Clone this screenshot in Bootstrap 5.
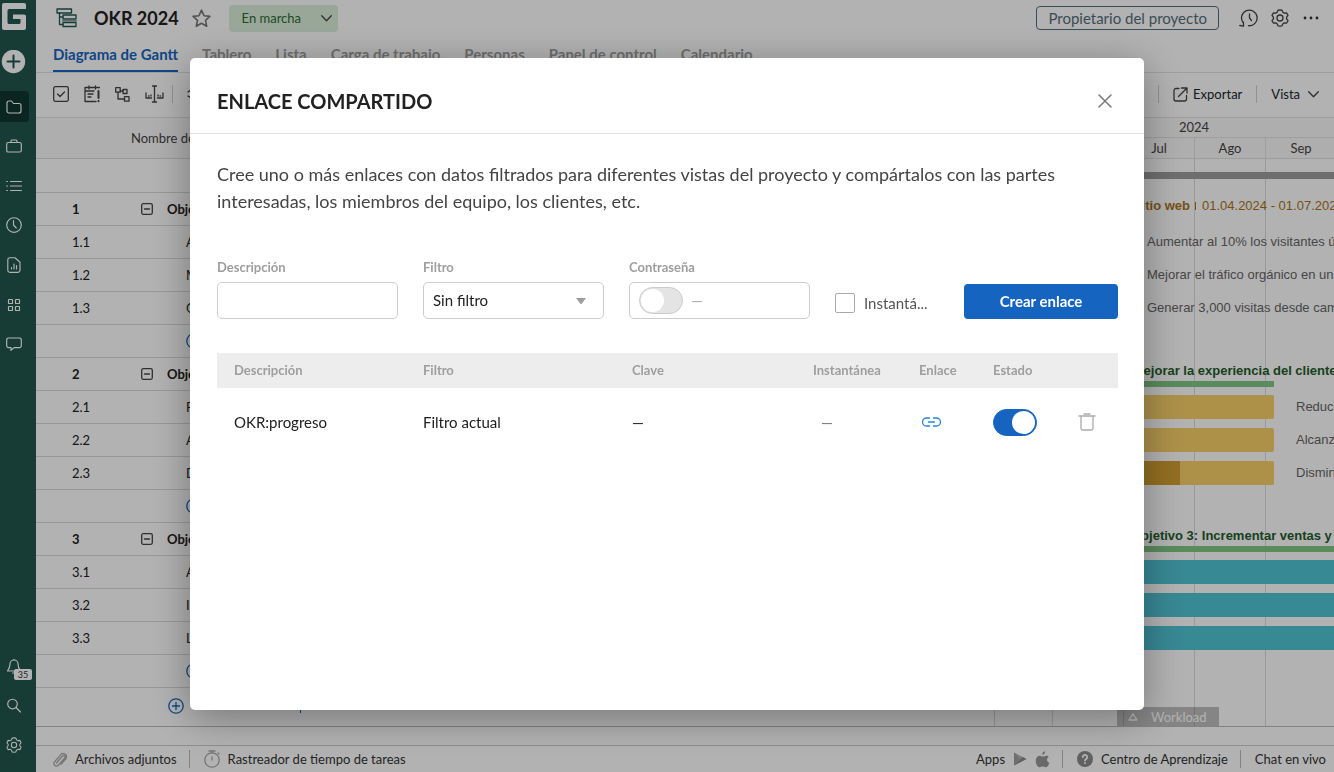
<!DOCTYPE html>
<html lang="es">
<head>
<meta charset="utf-8">
<meta name="viewport" content="width=device-width, initial-scale=1">
<title>OKR 2024</title>
<link href="https://cdn.jsdelivr.net/npm/bootstrap@5.3.0/dist/css/bootstrap.min.css" rel="stylesheet">
<style>
  :root { --brand: #1565c0; --line: #e2e2e2; --ink: #212121; }
  body { font-family: Lato, "Liberation Sans", sans-serif; font-size: 13px; line-height: 20px; color: var(--ink); overflow: hidden; }
  svg { display: block; flex: none; fill: none; stroke: currentColor; stroke-width: 1.3; stroke-linecap: round; stroke-linejoin: round; }
  .plain { border: 0; background: none; padding: 0; color: inherit; display: flex; align-items: center; }
  a { color: inherit; text-decoration: none; }
  .ic-dark { color: #444; }
  .ic-mid { color: #777; }
  .ic-soft { color: #aaa; }
  .ic-link { color: #2a82d0; }
  .ic-green { color: #22574d; }

  /* side rail */
  .rail { flex: 0 0 36px; background: #22574d; color: #fff; }
  .rail svg { stroke-width: 1.15; }
  .rail-logo { padding: 3px 0 0 2px; }
  .rail-main { height: 269px; margin-top: 17px; }
  .rail .rail-btn { width: 29px; height: 31px; padding-left: 6px; border-radius: 0 4px 4px 0; }
  .rail .rail-btn.on { background: #113630; }
  .bell-count { position: absolute; left: 14px; top: 18px; width: 18px; border-radius: 2px; background: #fff; color: #333; font-size: 9px; line-height: 11px; text-align: center; }

  /* project header */
  .top-row { height: 36px; padding: 0 15px 0 20px; }
  .top-row h1 { font-size: 18px; line-height: 24px; font-weight: 700; margin: 0 13px 0 17px; }
  .status-btn { height: 27px; width: 109px; padding: 0 6px 0 13px; margin-left: 18px; border: 0; border-radius: 4px; background: #dcefdc; color: #2e6b33; }
  .owner { border: 1px solid #546e7a; border-radius: 4px; color: #546e7a; font-size: 15px; line-height: 22px; padding: 0 11px; }
  .view-tabs { height: 37px; padding-left: 17px; gap: 24px; border-bottom: 1px solid var(--line); font-size: 15px; font-weight: 700; color: #9e9e9e; }
  .view-tabs a { line-height: 36px; border-bottom: 2px solid transparent; height: 36px; white-space: nowrap; }
  .view-tabs a.on { color: var(--brand); border-color: var(--brand); }
  .tools { height: 45px; padding: 0 15px 2px 17px; border-bottom: 1px solid var(--line); color: #333; gap: 14px; }
  .tool-set { gap: 15px; margin-right: -6px; color: #444; }
  .vr-line { width: 1px; height: 18px; background: #d0d0d0; }

  /* task grid */
  .task-pane { flex: 0 0 959px; border-right: 1px solid #d5d5d5; }
  .task-table { width: 100%; table-layout: fixed; border-collapse: separate; border-spacing: 0; }
  .task-table th, .task-table td { height: 33px; padding: 0; border-bottom: 1px solid #dadada; white-space: nowrap; font-weight: 400; }
  .task-table thead th { height: 41px; background: #fafafa; padding-left: 95px; color: #444; }
  .task-table tr.first td { height: 34px; }
  .task-table td:first-child { padding-left: 36px; }
  .task-table tr.goal td { font-weight: 700; }
  .task-table td.sub { padding-left: 45px; }
  .task-table tr.last td { height: 36px; border-bottom: 0; }
  .fold { margin-right: 14px; }
  .add { color: var(--brand); }
  .add-first { padding-left: 27px; gap: 116px; }
  .add-split { width: 1px; height: 14px; background: var(--brand); }

  /* timeline */
  .time-pane { min-width: 0; font-family: "Liberation Sans", sans-serif; }
  .time-head { font-family: Lato, sans-serif; background: #fafafa; color: #444; }
  .year-row { height: 20px; padding-left: 184px; border-bottom: 1px solid var(--line); line-height: 18px; }
  .month-row { display: grid; grid-template-columns: 58px repeat(4, 71px); height: 21px; border-bottom: 1px solid var(--line); text-align: center; }
  .month-row span { border-right: 1px solid var(--line); }
  .time-body { background: repeating-linear-gradient(90deg, transparent 0 57px, #dcdcdc 57px 58px, transparent 58px 71px); }
  .t-row { height: 33px; white-space: nowrap; overflow: hidden; display: flex; align-items: center; color: #666; }
  .t-row.goal { display: block; padding-top: 4px; font-weight: 700; color: #235c2b; }
  .t-row.late { color: #a8741a; }
  .t-end { flex: none; display: flex; justify-content: flex-end; }
  .t-dates { font-weight: 400; padding-left: 5px; gap: 6px; }
  .t-dates::before { content: ""; width: 1px; height: 8px; background: currentColor; }
  .goal-bar { height: 6px; background: #81c784; }
  .t-bar { flex: none; height: 24px; border-radius: 2px; background: #f8d069; margin-right: 22px; overflow: hidden; }
  .t-bar.teal { background: #50c4d5; }
  .t-done { height: 100%; background: #d29f30; }
  .project-bar { height: 7px; width: 100%; background: #9e9e9e; }
  .load-tab { position: absolute; right: 115px; bottom: 0; width: 102px; height: 19px; padding-left: 11px; background: rgba(0,0,0,.25); color: #fff; gap: 13px; }
  .strip { height: 19px; border-top: 1px solid #bbb; }
  .foot { height: 27px; border-top: 1px solid #ccc; padding: 0 8px 0 17px; color: #333; white-space: nowrap; }
  .foot .vr-line { margin: 0 14px 0 12px; background: #bbb; }

  /* shared link dialog */
  .modal-backdrop.show { opacity: .3; }
  .modal-dialog { max-width: 954px; margin: 58px auto 0; }
  .modal-content { min-height: calc(100vh - 120px); border: 0; border-radius: 5px; box-shadow: 0 8px 40px rgba(0,0,0,.35); }
  .modal-header { height: 76px; padding: 10px 32px 0 27px; border-color: #ddd; }
  .modal-title { font-size: 20px; line-height: 28px; font-weight: 700; }
  .modal-body { padding: 27px 26px 27px 27px; }
  .modal-body p { font-size: 18px; line-height: 27px; color: #444; margin-bottom: 42px; }
  .new-link { display: grid; grid-template-columns: repeat(3, minmax(0, 1fr)) 104px 154px; gap: 25px; align-items: end; margin-bottom: 34px; }
  .new-link .form-label { font-size: 13px; line-height: 20px; font-weight: 700; color: #9e9e9e; margin-bottom: 5px; display: block; }
  .new-link .form-control, .new-link .form-select { height: 37px; border-color: #ccc; border-radius: 5px; padding: 0 9px; font-size: 15px; color: var(--ink); }
  .new-link .form-select { background: #fff url("data:image/svg+xml,%3Csvg xmlns='http://www.w3.org/2000/svg' viewBox='0 0 10 6'%3E%3Cpath d='M0 0h10L5.500 6h-1z' fill='%239e9e9e'/%3E%3C/svg%3E") no-repeat right 17px center / 10px 6px; }
  .snap { height: 32px; font-size: 15px; color: #555; white-space: nowrap; gap: 9px; }
  .snap .form-check-input { width: 20px; height: 20px; margin: 0; border-color: #aaa; border-radius: 2px; flex: none; }
  .create { height: 35px; background: var(--brand); border: 0; border-radius: 4px; font-size: 15px; font-weight: 700; padding: 0; color: #fff; }
  .toggle { appearance: none; flex: none; display: flex; margin: 0; width: 44px; height: 27px; padding: 1px; border: 1px solid #ccc; border-radius: 14px; background: #e4e4e4; }
  .toggle::before { content: ""; width: 23px; height: 23px; border-radius: 50%; background: #fff; }
  .toggle:checked { background: var(--brand); border-color: var(--brand); justify-content: flex-end; }
  .links { width: 100%; table-layout: fixed; }
  .links th { height: 35px; background: #ededed; color: #9e9e9e; font-size: 13px; font-weight: 700; padding: 0 0 2px 17px; }
  .links td { height: 68px; font-size: 15px; padding: 0 0 0 17px; }
</style>
</head>
<body>
<div class="d-flex vh-100">
  <nav class="rail d-flex flex-column" aria-label="Principal">
    <a href="#" aria-label="Inicio" class="rail-logo d-block"><svg width="24" height="27" viewBox="0 0 24 27"><path stroke="none" fill="#fff" d="M2 0h20a2 2 0 0 1 2 2v4H7a1.500 1.500 0 0 0-1.500 1.500v12A1.500 1.500 0 0 0 7 21h10a1.500 1.500 0 0 0 1.500-1.500V16H11v-4.500h11a2 2 0 0 1 2 2V25a2 2 0 0 1-2 2H2a2 2 0 0 1-2-2V2a2 2 0 0 1 2-2z"/></svg></a>
    <button class="plain mt-3 pt-1" aria-label="Crear"><svg width="27" height="24" viewBox="0 0 27 24"><circle cx="13.500" cy="11.500" r="11.700" fill="#fff" stroke="none"/><path d="M7.500 11.500h12M13.500 5.500v12" stroke="#22574d" stroke-width="2"/></svg></button>
    <div class="rail-main d-flex flex-column justify-content-between">
      <button class="plain rail-btn on" aria-label="Proyectos"><svg width="16" height="16" viewBox="0 0 16 16"><path d="M1 4a2 2 0 0 1 2-2h2.500l2 2.500H13a2 2 0 0 1 2 2V12a2 2 0 0 1-2 2H3a2 2 0 0 1-2-2z"/></svg></button>
      <button class="plain rail-btn" aria-label="Portafolio"><svg width="16" height="16" viewBox="0 0 16 16"><rect x=".7" y="4.500" width="14.600" height="9.500" rx="1.500"/><path d="M5 4.500V3a1 1 0 0 1 1-1h4a1 1 0 0 1 1 1v1.500"/></svg></button>
      <button class="plain rail-btn" aria-label="Mis tareas"><svg width="16" height="16" viewBox="0 0 16 16"><path d="M4.500 3.500h11M4.500 8h11M4.500 12.500h11M.7 3.500h.8M.7 8h.8M.7 12.500h.8"/></svg></button>
      <button class="plain rail-btn" aria-label="Tiempo"><svg width="16" height="16" viewBox="0 0 16 16"><circle cx="8" cy="8" r="7.300"/><path d="M7.500 3.500V8l2.800 3"/></svg></button>
      <button class="plain rail-btn" aria-label="Informes"><svg width="16" height="16" viewBox="0 0 16 16"><path d="M3.500.7h5.500l5 4.500V13a2.300 2.300 0 0 1-2.300 2.300H3.500A2 2 0 0 1 1.800 13.300V2.700a2 2 0 0 1 1.700-2zM5.500 12v-1.500M8 12V7M10.500 12V8.500"/></svg></button>
      <button class="plain rail-btn" aria-label="Paneles"><svg width="16" height="16" viewBox="0 0 16 16"><rect x="2.500" y="2.500" width="4" height="4" rx=".6"/><rect x="9.500" y="2.500" width="4" height="4" rx=".6"/><rect x="2.500" y="9.500" width="4" height="4" rx=".6"/><rect x="9.500" y="9.500" width="4" height="4" rx=".6"/></svg></button>
      <button class="plain rail-btn" aria-label="Comentarios"><svg width="16" height="16" viewBox="0 0 16 16"><path d="M2.500 2h11a1.800 1.800 0 0 1 1.800 1.800v6a1.800 1.800 0 0 1-1.800 1.800H8l-3 2.700v-2.700H2.500A1.800 1.800 0 0 1 .7 9.800v-6A1.800 1.800 0 0 1 2.500 2z"/></svg></button>
    </div>
    <div class="mt-auto d-flex flex-column gap-2 pb-2 mb-1">
      <button class="plain rail-btn position-relative" aria-label="Avisos"><svg width="16" height="16" viewBox="0 0 16 16"><path d="M8 0v1M8 1a4 4 0 0 1 4 4c0 3.500 1 5 2.500 7h-13C3 10 4 8.500 4 5a4 4 0 0 1 4-4zM6.500 14h3"/></svg><span class="bell-count">35</span></button>
      <button class="plain rail-btn" aria-label="Buscar"><svg width="16" height="16" viewBox="0 0 16 16"><circle cx="6.500" cy="6" r="4.800"/><path d="M10 9.500l4.500 4.500"/></svg></button>
      <button class="plain rail-btn" aria-label="Ajustes"><svg width="16" height="16" viewBox="0 0 18 18"><path d="M9 .9l2 .3.900 2.100 1.300.8 2.300-.3 1.500 2.600-1.400 1.800v1.600l1.400 1.800-1.500 2.600-2.300-.3-1.300.8-.9 2.100-2 .3-2-.3-.9-2.100-1.300-.8-2.300.3L1 11.600l1.400-1.800V8.200L1 6.400l1.500-2.600 2.300.3 1.300-.8.900-2.100z"/><circle cx="9" cy="9" r="3"/></svg></button>
    </div>
  </nav>

  <main class="flex-fill d-flex flex-column overflow-hidden">
    <header class="top-row d-flex align-items-center">
      <svg class="ic-green" width="21" height="20" viewBox="0 0 21 20"><rect x="1" y="1" width="14.500" height="4"/><rect x="7" y="7" width="13" height="4"/><rect x="7" y="14.500" width="13" height="4"/><path d="M3.500 5v11.500H7M3.500 9H7"/><path d="M7 12.800h13" stroke="#7fa19a" stroke-width="2"/></svg>
      <h1>OKR 2024</h1>
      <button class="plain ic-mid" aria-label="Favorito"><svg width="19" height="19" viewBox="0 0 19 19"><path stroke-width="1.600" d="M9.500 1.200l2.500 5.500 5.900.7-4.400 4 1.200 5.900-5.200-3-5.200 3 1.200-5.900-4.400-4 5.900-.7z"/></svg></button>
      <button class="status-btn d-flex align-items-center justify-content-between"><span>En marcha</span><svg class="ic-dark" width="11" height="7" viewBox="0 0 11 7"><path d="M.7.7l4.800 5 4.800-5"/></svg></button>
      <span class="owner ms-auto me-3">Propietario del proyecto</span>
      <div class="d-flex align-items-center gap-2 ps-1 ic-dark">
        <button class="plain me-1" aria-label="Historial"><svg width="20" height="18" viewBox="0 0 20 18"><path d="M4 13.500A7.800 7.800 0 1 1 9.500 16.700M4.500 17.200v-4M.8 16.500l3.700.7M10.500 5v4l2 2.500"/></svg></button>
        <button class="plain" aria-label="Ajustes del proyecto"><svg width="18" height="18" viewBox="0 0 18 18"><path d="M9 .9l2 .3.900 2.100 1.300.8 2.300-.3 1.500 2.600-1.400 1.800v1.600l1.400 1.800-1.500 2.600-2.300-.3-1.300.8-.9 2.100-2 .3-2-.3-.9-2.100-1.300-.8-2.300.3L1 11.600l1.400-1.800V8.200L1 6.400l1.500-2.600 2.300.3 1.300-.8.900-2.100z"/><circle cx="9" cy="9" r="3"/></svg></button>
        <button class="plain ms-1" aria-label="Más"><svg width="18" height="4" viewBox="0 0 18 4"><g fill="#333" stroke="none"><circle cx="4" cy="2" r="1.400"/><circle cx="10" cy="2" r="1.400"/><circle cx="16" cy="2" r="1.400"/></g></svg></button>
      </div>
    </header>
    <nav class="view-tabs d-flex" aria-label="Vistas">
      <a href="#" class="on">Diagrama de Gantt</a><a href="#">Tablero</a><a href="#">Lista</a><a href="#">Carga de trabajo</a><a href="#">Personas</a><a href="#">Panel de control</a><a href="#">Calendario</a>
    </nav>
    <div class="tools d-flex align-items-center">
      <div class="tool-set d-flex align-items-center">
        <button class="plain" aria-label="Seleccionar"><svg width="16" height="16" viewBox="0 0 16 16"><rect x=".7" y=".7" width="14.600" height="14.600" rx="1.500"/><path d="M4.500 8l2.500 2.500 4.500-4.500"/></svg></button>
        <button class="plain" aria-label="Fechas"><svg width="16" height="18" viewBox="0 0 16 18"><path d="M12 16.500H1V2.500h14.500M1 6h9M5 1v3M11.500 1v3M4 9h5M4 12h3"/><path d="M14.500 6v7M14.500 16v.3" stroke-width="2"/></svg></button>
        <button class="plain" aria-label="Dependencias"><svg width="15" height="15" viewBox="0 0 15 15"><rect x=".7" y=".7" width="4.500" height="4.500"/><rect x="8" y="2.500" width="4" height="4"/><rect x="9.500" y="9.700" width="4.500" height="4.500"/><path d="M5.200 4H8M3 5.200V12h6.500"/></svg></button>
        <button class="plain" aria-label="Dividir"><svg width="19" height="18" viewBox="0 0 19 18"><path d="M9.500 1v16M7.500 1h4M7.500 17h4M1 8v5h5.500M3.500 11h.5M18 8v5h-5.500M15 11h.5M6 10v1M13 10v1"/></svg></button>
      </div>
      <span class="vr-line"></span>
      <button class="plain" aria-label="Expandir"><svg width="11" height="12" viewBox="0 0 11 12"><path d="M1 4l4.500-3L10 4M1 8l4.500 3L10 8"/></svg></button>
      <span class="vr-line ms-auto"></span>
      <button class="plain gap-1 ic-dark"><svg width="16" height="15" viewBox="0 0 16 15"><path d="M6 1.500H3a2 2 0 0 0-2 2V12a2 2 0 0 0 2 2h8.500a2 2 0 0 0 2-2V8.500M5.500 9.500l8-8M8.500 1H14v5"/></svg><span class="text-dark">Exportar</span></button>
      <span class="vr-line"></span>
      <button class="plain gap-2 ic-dark"><span class="text-dark">Vista</span><svg width="11" height="7" viewBox="0 0 11 7"><path d="M.7.7l4.800 5 4.800-5"/></svg></button>
    </div>

    <section class="d-flex flex-fill overflow-hidden position-relative">
      <div class="task-pane">
        <table class="task-table">
          <colgroup><col style="width:105px"><col></colgroup>
          <thead><tr><th colspan="2">Nombre de la tarea</th></tr></thead>
          <tbody id="tasks"></tbody>
        </table>
      </div>
      <div class="time-pane flex-fill d-flex flex-column">
        <div class="time-head">
          <div class="year-row">2024</div>
          <div class="month-row"><span></span><span>Jun</span><span>Jul</span><span>Ago</span><span>Sep</span></div>
        </div>
        <div class="time-body flex-fill" id="timeline"></div>
      </div>
      <button class="plain load-tab"><svg width="10" height="8" viewBox="0 0 10 8"><path d="M5 .8L9 7H1z"/></svg><span>Workload</span></button>
    </section>
    <div class="strip"></div>
    <footer class="foot d-flex align-items-center">
      <a href="#" class="d-flex align-items-center gap-2"><svg class="ic-soft" width="14" height="15" viewBox="0 0 14 15"><path d="M3.500 11l6-7a1.500 1.500 0 0 1 2.300 2L5.300 13.300A2.500 2.500 0 0 1 1.500 10L8 2.300A3.300 3.300 0 0 1 13 6.500L8 12.300"/></svg>Archivos adjuntos</a>
      <span class="vr-line"></span>
      <a href="#" class="d-flex align-items-center gap-2"><svg class="ic-soft" width="16" height="18" viewBox="0 0 16 18"><circle cx="8" cy="10" r="7.200"/><path d="M5 1h6M8 1v2M8 7v3M14 3l1 1"/></svg>Rastreador de tiempo de tareas</a>
      <span class="ms-auto me-2">Apps</span>
      <a href="#" aria-label="Google Play"><svg width="14" height="14" viewBox="0 0 14 14"><g stroke="none"><path fill="#b5b5b5" d="M1 .5L13.500 7 1 13.500z"/><path fill="#a0a0a0" d="M1 .5L7 7l-6 6.500z"/><path fill="#8c8c8c" d="M1 13.500L9.500 5 13.500 7z"/></g></svg></a>
      <a href="#" aria-label="App Store" class="ms-2"><svg width="15" height="17" viewBox="0 0 15 17"><path stroke="none" fill="#999" d="M10.200.3c.1 1.800-1.300 3.500-3 3.500C7 2.200 8.500.5 10.200.3zM13.800 6c-2.500 1.500-2.300 4.700.5 6-.7 2-2 4.300-3.600 4.300-1.200 0-1.600-.7-3-.7s-1.900.7-3 .7C2.500 16.300.7 12.800.7 9.800c0-3 1.900-5 4-5 1.300 0 2.200.8 3.200.8.900 0 1.900-.9 3.500-.9.900 0 1.800.4 2.400 1.300z"/></svg></a>
      <span class="vr-line"></span>
      <a href="#" class="d-flex align-items-center gap-2"><svg width="16" height="16" viewBox="0 0 16 16"><circle cx="8" cy="8" r="8" fill="#8c8c8c" stroke="none"/><path d="M5.800 6a2.200 2.200 0 1 1 3.300 2C8.300 8.500 8 8.800 8 9.500M8 12v.2" stroke="#fff" stroke-width="1.800"/></svg>Centro de Aprendizaje</a>
      <span class="vr-line"></span>
      <a href="#">Chat en vivo</a>
    </footer>
  </main>
</div>

<div class="modal-backdrop show"></div>
<div class="modal show d-block" role="dialog" aria-modal="true" aria-labelledby="shareTitle">
  <div class="modal-dialog">
    <div class="modal-content">
      <div class="modal-header">
        <h2 class="modal-title" id="shareTitle">ENLACE COMPARTIDO</h2>
        <button class="plain ic-mid" aria-label="Cerrar"><svg width="14" height="14" viewBox="0 0 14 14"><path stroke-width="1.500" d="M1 1l12 12M13 1L1 13"/></svg></button>
      </div>
      <div class="modal-body">
        <p>Cree uno o más enlaces con datos filtrados para diferentes vistas del proyecto y compártalos con las partes interesadas, los miembros del equipo, los clientes, etc.</p>
        <form class="new-link">
          <div><label class="form-label" for="desc">Descripción</label><input class="form-control" id="desc" type="text"></div>
          <div><label class="form-label" for="filter">Filtro</label><select class="form-select" id="filter"><option>Sin filtro</option></select></div>
          <div><label class="form-label" for="pass">Contraseña</label>
            <div class="form-control d-flex align-items-center"><input class="toggle" type="checkbox" role="switch" id="pass"><span class="ms-2 ic-soft">—</span></div></div>
          <div class="snap d-flex align-items-center"><input class="form-check-input" type="checkbox" id="snap"><label for="snap">Instantá...</label></div>
          <button class="btn create" type="button">Crear enlace</button>
        </form>
        <table class="links">
          <colgroup><col style="width:189px"><col style="width:209px"><col style="width:181px"><col style="width:106px"><col style="width:74px"><col style="width:85px"><col></colgroup>
          <thead><tr><th>Descripción</th><th>Filtro</th><th>Clave</th><th>Instantánea</th><th>Enlace</th><th>Estado</th><th></th></tr></thead>
          <tbody><tr>
            <td>OKR:progreso</td><td>Filtro actual</td><td>—</td><td><span class="ms-2 ic-mid">—</span></td>
            <td><a href="#" aria-label="Copiar enlace" class="ic-link"><svg width="24" height="12" viewBox="-3 0 24 12"><path d="M7.500 2H4.500a4 4 0 0 0 0 8h3M11.500 2h3a4 4 0 0 1 0 8h-3M6.500 6h6"/></svg></a></td>
            <td><input class="toggle" type="checkbox" role="switch" checked aria-label="Estado"></td>
            <td><button class="plain ic-soft" aria-label="Eliminar"><svg width="18" height="18" viewBox="0 0 18 18"><path d="M3 3.500v12a1.500 1.500 0 0 0 1.500 1.500h9a1.500 1.500 0 0 0 1.500-1.500v-12M1 3h16M6 1h6"/></svg></button></td>
          </tr></tbody>
        </table>
      </div>
    </div>
  </div>
</div>

<script>
  const plus = '<span class="add d-flex"><svg width="16" height="16" viewBox="0 0 16 16"><circle cx="8" cy="8" r="7.200"/><path d="M8 4.500v7M4.500 8h7"/></svg></span>';
  const fold = '<button class="plain fold" aria-label="Contraer"><svg class="ic-dark" width="12" height="12" viewBox="0 0 12 12"><rect x=".7" y=".7" width="10.600" height="10.600" rx="1.500"/><path d="M3.500 6h5"/></svg></button>';
  const tasks = [
    ['1', 'Objetivo 1'], ['1.1', 'Aumentar'], ['1.2', 'Mejorar'], ['1.3', 'Generar'], null,
    ['2', 'Objetivo 2'], ['2.1', 'Reducir'], ['2.2', 'Alcanzar'], ['2.3', 'Disminuir'], null,
    ['3', 'Objetivo 3'], ['3.1', 'Aumentar'], ['3.2', 'Incrementar'], ['3.3', 'Lanzar'], null
  ];
  document.getElementById('tasks').innerHTML =
    '<tr class="first"><td></td><td></td></tr>' +
    tasks.map(t => !t ? `<tr><td></td><td class="sub">${plus}</td></tr>`
      : t[0].length === 1 ? `<tr class="goal"><td>${t[0]}</td><td><div class="d-flex align-items-center">${fold}${t[1]}</div></td></tr>`
      : `<tr><td>${t[0]}</td><td class="sub">${t[1]}</td></tr>`).join('') +
    `<tr class="last"><td></td><td><div class="d-flex align-items-center add-first">${plus}<span class="add-split"></span></div></td></tr>`;

  const label = s => `<div class="t-row"><span class="t-end" style="width:152px"></span>${s}</div>`;
  const bar = (w, s, done, cls) => `<div class="t-row"><div class="t-bar ${cls || ''}" style="width:${w}px"><div class="t-done" style="width:${done}px"></div></div>${s}</div>`;
  const goal = (left, s, w) => `<div class="t-row goal"><div style="margin-left:${left}px">${s}</div><div class="goal-bar" style="width:${w}px"></div></div>`;
  const blank = '<div class="t-row"></div>';
  document.getElementById('timeline').innerHTML = [
    '<div class="t-row"><div class="project-bar"></div></div>',
    '<div class="t-row goal late"><div class="d-flex"><span class="t-end" style="width:195px">el tráfico del sitio web</span><span class="t-dates d-flex align-items-center">01.04.2024 - 01.07.2024</span></div></div>',
    label('Aumentar al 10% los visitantes únicos'),
    label('Mejorar el tráfico orgánico en un 15%'),
    label('Generar 3,000 visitas desde campañas'),
    blank,
    goal(67, 'Objetivo 2: Mejorar la experiencia del cliente', 279),
    bar(279, 'Reducir', 0), bar(279, 'Alcanzar', 0), bar(279, 'Disminuir', 185),
    blank,
    goal(136, 'Objetivo 3: Incrementar ventas y retención', 500),
    bar(500, '', 0, 'teal'), bar(500, '', 0, 'teal'), bar(500, '', 0, 'teal')
  ].join('');
</script>
<script src="https://cdn.jsdelivr.net/npm/bootstrap@5.3.0/dist/js/bootstrap.bundle.min.js"></script>
</body>
</html>
